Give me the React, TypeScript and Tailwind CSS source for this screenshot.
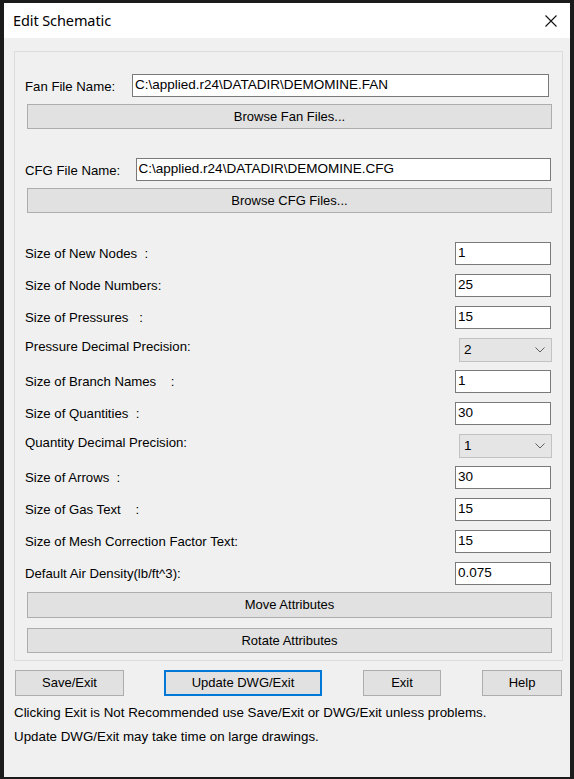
import React from "react";

const font = { fontFamily: '"Liberation Sans", Arial, sans-serif' };

function TextBox({ value, className }: { value: string; className: string }) {
  return (
    <div
      className={`h-[23px] bg-white border border-[#7a7a7a] pl-[2px] pt-[2px] text-[13.5px] leading-[16px] text-black whitespace-nowrap overflow-hidden ${className}`}
    >
      {value}
    </div>
  );
}

function Btn({ label, className }: { label: string; className: string }) {
  return (
    <div
      className={`flex items-center justify-center bg-[#e1e1e1] border border-[#adadad] text-[13px] text-black ${className}`}
    >
      {label}
    </div>
  );
}

function Select({ value }: { value: string }) {
  return (
    <div className="ml-auto mr-[-1px] w-[93px] h-[24px] bg-[#e5e5e5] border border-[#c2c2c2] flex items-center pl-[4px] pr-[6px] text-[13.5px] text-black">
      <span className="flex-1 pt-[2px]">{value}</span>
      <svg width="10" height="6" viewBox="0 0 10 6">
        <polyline points="0.5,0.5 5,5 9.5,0.5" fill="none" stroke="#606060" strokeWidth="1" />
      </svg>
    </div>
  );
}

function Row({ label, children }: { label: string; children: React.ReactNode }) {
  return (
    <div className="flex items-center h-[23px]">
      <span className="whitespace-pre text-[13.2px] text-black ml-[-1px]">{label}</span>
      {children}
    </div>
  );
}

export default function App() {
  return (
    <div className="w-[574px] h-[779px] bg-[#1b1b1b] pt-[3px] pl-[4px] overflow-hidden" style={font}>
      <div className="w-[566px] h-[774px] bg-[#f0f0f0] flex flex-col">
        {/* Title bar */}
        <div className="h-[35px] bg-white flex items-center pl-[9px] pr-[13px]">
          <span
            className="text-[14.5px] text-black tracking-[-0.1px]"
            style={{ fontFamily: '"Noto Sans", "Open Sans", sans-serif' }}
          >
            Edit Schematic
          </span>
          <svg className="ml-auto" width="12" height="12" viewBox="0 0 12 12">
            <path d="M0.5 0.5 L11.5 11.5 M11.5 0.5 L0.5 11.5" stroke="#111" strokeWidth="1.1" fill="none" />
          </svg>
        </div>

        {/* Group box */}
        <div className="ml-[10px] mt-[13px] w-[549px] h-[610px] border border-[#dcdcdc] pl-[11px] pr-[11px] flex flex-col">
          {/* Fan */}
          <div className="mt-[22px] flex items-center h-[23px]">
            <span className="text-[13.2px] text-black w-[106px] pt-[2px] ml-[-1px] mr-[1px] whitespace-nowrap">Fan File Name:</span>
            <TextBox value="C:\applied.r24\DATADIR\DEMOMINE.FAN" className="w-[417px]" />
          </div>
          <Btn label="Browse Fan Files..." className="mt-[7px] h-[25px] w-[525px] ml-[1px]" />

          {/* CFG */}
          <div className="mt-[29px] flex items-center h-[23px]">
            <span className="text-[13.2px] text-black w-[110px] pt-[2px] ml-[-1px] mr-[1px] whitespace-nowrap">CFG File Name:</span>
            <TextBox value="C:\applied.r24\DATADIR\DEMOMINE.CFG" className="w-[417px]" />
          </div>
          <Btn label="Browse CFG Files..." className="mt-[7px] h-[25px] w-[525px] ml-[1px]" />

          {/* Size rows */}
          <div className="mt-[29px] flex flex-col gap-[9px]">
            <Row label="Size of New Nodes  :">
              <TextBox value="1" className="ml-auto w-[96px]" />
            </Row>
            <Row label="Size of Node Numbers:">
              <TextBox value="25" className="ml-auto w-[96px]" />
            </Row>
            <Row label="Size of Pressures   :">
              <TextBox value="15" className="ml-auto w-[96px]" />
            </Row>
            <div className="flex items-center h-[23px]">
              <span className="text-[13.2px] text-black mt-[-6px] ml-[-1px]">Pressure Decimal Precision:</span>
              <Select value="2" />
            </div>
            <Row label="Size of Branch Names    :">
              <TextBox value="1" className="ml-auto w-[96px]" />
            </Row>
            <Row label="Size of Quantities  :">
              <TextBox value="30" className="ml-auto w-[96px]" />
            </Row>
            <div className="flex items-center h-[23px]">
              <span className="text-[13.2px] text-black mt-[-6px] ml-[-1px]">Quantity Decimal Precision:</span>
              <Select value="1" />
            </div>
            <Row label="Size of Arrows  :">
              <TextBox value="30" className="ml-auto w-[96px]" />
            </Row>
            <Row label="Size of Gas Text    :">
              <TextBox value="15" className="ml-auto w-[96px]" />
            </Row>
            <Row label="Size of Mesh Correction Factor Text:">
              <TextBox value="15" className="ml-auto w-[96px]" />
            </Row>
            <Row label="Default Air Density(lb/ft^3):">
              <TextBox value="0.075" className="ml-auto w-[96px]" />
            </Row>
          </div>

          <Btn label="Move Attributes" className="mt-[7px] h-[26px] w-[525px] ml-[1px]" />
          <Btn label="Rotate Attributes" className="mt-[10px] h-[25px] w-[525px] ml-[1px]" />
        </div>

        {/* Bottom buttons */}
        <div className="mt-[9px] ml-[11px] flex items-center h-[26px]">
          <Btn label="Save/Exit" className="w-[109px] h-[26px]" />
          <div className="ml-[40px] w-[158px] h-[26px] flex items-center justify-center bg-[#e1e1e1] border-2 border-[#0078d7] text-[13px] text-black">
            Update DWG/Exit
          </div>
          <Btn label="Exit" className="ml-[41px] w-[78px] h-[26px]" />
          <Btn label="Help" className="ml-[41px] w-[80px] h-[26px]" />
        </div>

        <div className="ml-[10px] mt-[9px] text-[13.35px] text-black leading-[16px] whitespace-nowrap">
          Clicking Exit is Not Recommended use Save/Exit or DWG/Exit unless problems.
        </div>
        <div className="ml-[10px] mt-[8px] text-[13.35px] text-black leading-[16px] whitespace-nowrap">
          Update DWG/Exit may take time on large drawings.
        </div>
      </div>
    </div>
  );
}
